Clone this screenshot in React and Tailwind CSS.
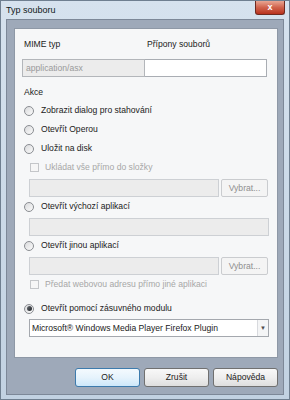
const FONT = { fontFamily: '"Liberation Sans", Arial, sans-serif' };

function Radio({ checked }) {
  return (
    <span className="flex h-[10px] w-[10px] shrink-0 items-center justify-center rounded-full border border-[#8a8d92] bg-gradient-to-br from-[#d9dadc] to-[#fbfbfb]">
      {checked && <span className="h-[5px] w-[5px] rounded-full bg-gradient-to-br from-[#6a6e74] to-[#202428]" />}
    </span>
  );
}

function RadioRow({ label, checked }) {
  return (
    <div className="flex h-[19px] items-center pl-[9px]">
      <Radio checked={checked} />
      <span className="ml-[7px] text-[#1b1b1b]">{label}</span>
    </div>
  );
}

function CheckRow({ label }) {
  return (
    <div className="flex h-[19px] items-center pl-[15px]">
      <span className="h-[9px] w-[9px] shrink-0 border border-[#c4c6c9] bg-[#f6f6f6]" />
      <span className="ml-[6px] text-[#a7a7a7]">{label}</span>
    </div>
  );
}

function DisabledInput({ className = '' }) {
  return <div className={`h-[18px] border border-[#cdd0d4] bg-[#ececec] ${className}`} />;
}

function PickRow() {
  return (
    <div className="mt-[2px] flex h-[18px] gap-[2px] pl-[14px] pr-[9px]">
      <DisabledInput className="flex-1" />
      <div className="flex w-[47px] items-center justify-center rounded-[2px] border border-[#cacccf] bg-[#f4f4f4] text-[#8f8f8f]">
        Vybrat...
      </div>
    </div>
  );
}

function Button({ children, primary }) {
  return (
    <div
      className={`flex h-[19px] w-[65px] items-center justify-center rounded-[3px] border text-[#1b1b1b] ${
        primary
          ? 'border-[#3d7bad] bg-gradient-to-b from-[#f4fafe] via-[#e6f3fc] to-[#cde8fa]'
          : 'border-[#707070] bg-gradient-to-b from-[#f8f8f8] via-[#eeeeee] to-[#dedede]'
      }`}
    >
      {children}
    </div>
  );
}

export default function App() {
  return (
    <div
      className="flex h-[400px] w-[290px] flex-col border border-[#6f7f90] bg-gradient-to-b from-[#d6e2ee] to-[#c2d2e2] text-[8.6px] leading-none"
      style={FONT}
    >
      {/* titulek */}
      <div className="relative flex h-[18px] items-center pl-[5px]">
        <span className="text-[9px] text-[#101820]">Typ souboru</span>
        <div className="absolute right-[4px] top-[0px] flex h-[14px] w-[30px] items-center justify-center rounded-b-[3px] border border-t-0 border-[#6e2a20] bg-gradient-to-b from-[#e8a593] via-[#d0624c] to-[#b8301c]">
          <span className="text-[9px] font-bold text-white">x</span>
        </div>
      </div>

      <div className="mx-[5px] mb-[4px] flex flex-1 flex-col border border-[#7d8898] bg-[#9ea9b9] pl-[7px] pr-[5px] pt-[8px]">
        {/* panel */}
        <div className="flex h-[330px] flex-col border border-[#8e98a6] bg-[#f6f7f8] pt-[9px]">
          <div className="flex h-[12px] items-center text-[#1b1b1b]">
            <span className="ml-[9px] w-[123px]">MIME typ</span>
            <span>Přípony souborů</span>
          </div>
          <div className="mt-[9px] flex h-[18px] pl-[7px] pr-[10px]">
            <div className="flex w-[123px] items-center border border-[#b3b6ba] bg-[#ececec] pl-[3px] text-[#9a9a9a]">
              application/asx
            </div>
            <div className="flex-1 border border-l-0 border-[#a9adb3] bg-white" />
          </div>
          <div className="mt-[9px] flex h-[12px] items-center pl-[9px] text-[#1b1b1b]">Akce</div>
          <div className="mt-[3px]">
            <RadioRow label="Zobrazit dialog pro stahování" />
            <RadioRow label="Otevřít Operou" />
            <RadioRow label="Uložit na disk" />
            <CheckRow label="Ukládat vše přímo do složky" />
            <PickRow />
            <RadioRow label="Otevřít výchozí aplikací" />
            <div className="mt-[2px] pl-[14px] pr-[8px]">
              <DisabledInput />
            </div>
            <RadioRow label="Otevřít jinou aplikací" />
            <PickRow />
            <CheckRow label="Předat webovou adresu přímo jiné aplikaci" />
            <div className="mt-[5px]">
              <RadioRow label="Otevřít pomocí zásuvného modulu" checked />
            </div>
            <div className="mt-[1px] pl-[14px] pr-[8px]">
              <div className="flex h-[18px] border border-[#a4a8ae] bg-white">
                <span className="flex flex-1 items-center pl-[2px] text-[#1b1b1b]">
                  Microsoft® Windows Media Player Firefox Plugin
                </span>
                <span className="flex w-[11px] items-center justify-center border-l border-[#d8dade] bg-[#f4f5f6] text-[6px] text-[#4c4c4c]">
                  ▼
                </span>
              </div>
            </div>
          </div>
        </div>

        <div className="mt-[10px] flex justify-end gap-[4px]">
          <Button primary>OK</Button>
          <Button>Zrušit</Button>
          <Button>Nápověda</Button>
        </div>
      </div>
    </div>
  );
}
